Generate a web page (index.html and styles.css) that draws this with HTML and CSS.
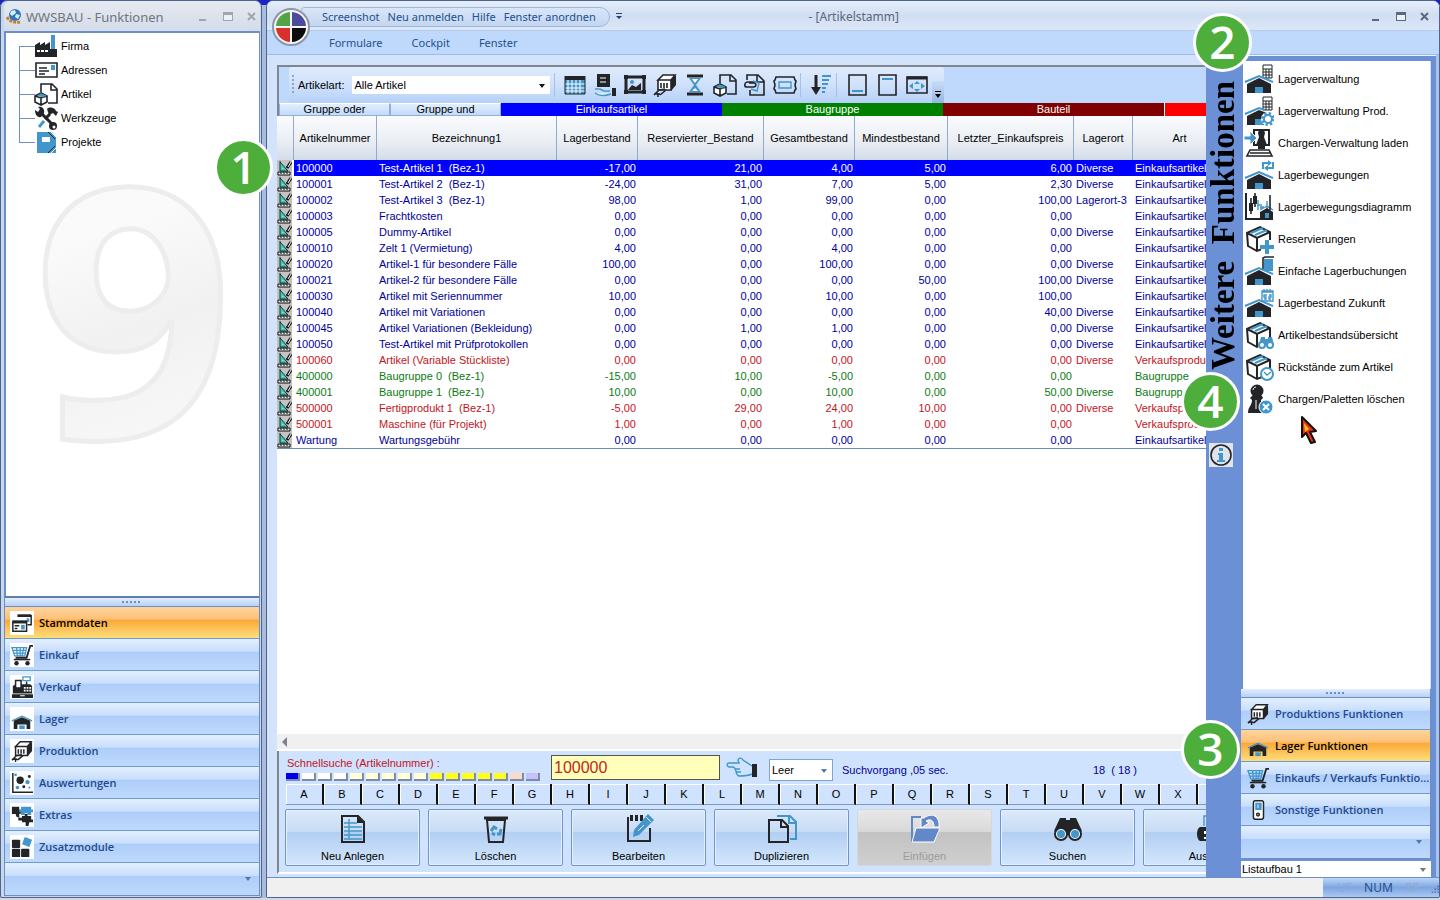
FILE: index.html
```html
<!DOCTYPE html>
<html lang="de">
<head>
<meta charset="utf-8">
<title>WWSBAU - Artikelstamm</title>
<link rel="stylesheet" href="styles.css">
</head>
<body>
<svg class="defs" aria-hidden="true">
  <symbol id="factory" viewBox="0 0 24 24"><path class="b" d="M17 1h4v15h-4z"/><path class="k" d="M1 23V11l5-3v3l5-3v3l5-3v7h7v8z"/><path class="w" d="M3 16h3v2H3zM7 16h3v2H7zM11 16h3v2h-3z"/></symbol>
  <symbol id="card" viewBox="0 0 24 24"><path class="ks" d="M2 5h21v14H2z"/><path class="ks" d="M5 10h8M5 13h10M5 16h6"/><path class="b" d="M17 7h4v5h-4z"/></symbol>
  <symbol id="artikel" viewBox="0 0 24 24"><path class="ks" d="M7 10V2h11l5 5v14h-9M17 2v6h6"/><path class="ks wf" d="M1 14l6-3 6 3v6l-6 3-6-3zM1 14l6 2 6-2M7 16v7"/><path class="bs" d="M4 13l6 2M6 12l6 2"/></symbol>
  <symbol id="tools" viewBox="0 0 24 24"><path class="kt" d="M7 7l13 13"/><path class="k" d="M1 4l3 2 2-3-2-2c4-1 7 2 6 6l-3 4c-4 1-6-3-6-7zM13 3c3-3 8-1 9 2l2 1-2 4-3-3-4 2z"/><path class="kt" d="M16 8l-5 5"/><path class="bt3" d="M10 15l-5 6"/><circle class="k" cx="19" cy="20" r="4"/><circle class="w" cx="20" cy="21" r="1.5"/></symbol>
  <symbol id="project" viewBox="0 0 24 24"><path class="b" d="M3 2h15l4 5v16H3z"/><path class="w" d="M8 7h8v5H8z"/><path class="ks thin" d="M14 2l7 7M14 23l7-7"/><path class="ws" d="M17 2l5 5M17 23l5-5"/></symbol>
  <symbol id="cards" viewBox="0 0 24 24"><path class="ks" d="M8 4h14v10h-4"/><path class="kt" d="M7 4h15"/><path class="b" d="M17 7h3v4h-3z"/><path class="ks wf" d="M2 10h15v11H2z"/><path class="kt" d="M2 11h15"/><path class="ks" d="M4 15h5M4 18h3"/><path class="b" d="M11 14h4v5h-4z"/></symbol>
  <symbol id="cart" viewBox="0 0 24 24"><path class="bs" d="M1 4h16l-2 9H4zM2 7h14M3 10h13M6 4l1 9M10 4v9M14 4l-2 9"/><path class="kt2" d="M24 2h-3l-4 13H5"/><path class="ks" d="M3 17h18"/><circle class="k" cx="6" cy="21" r="2.4"/><circle class="k" cx="18" cy="21" r="2.4"/></symbol>
  <symbol id="register" viewBox="0 0 24 24"><path class="k" d="M2 11l3-2h16l2 2v8H2zM1 20h23v4H1z"/><path class="ks wf" d="M5 5h6v8H5z"/><path class="bs wf" d="M13 1h8v4h-8z"/><path class="ks" d="M17 6v4"/><path class="w" d="M14 12h2v2h-2zM17 12h2v2h-2zM20 12h2v2h-2zM14 15h2v2h-2zM17 15h2v2h-2zM20 15h2v2h-2zM10 21h5v1h-5z"/></symbol>
  <symbol id="house" viewBox="0 0 24 24"><path class="bs" d="M1 14l11-5 11 5"/><path class="k" d="M3 14l9-4 9 4v9h-4v-5H7v5H3z"/><path class="b" d="M9 19h6v4H9z"/></symbol>
  <symbol id="produce" viewBox="0 0 24 24"><path class="ks wf" d="M5 7l5-5h12l-4 5zM5 7h13v10H5z"/><path class="k" d="M18 7l5-5v10l-5 6z"/><path class="ks" d="M8 10v5M11 10v5M14 10v5M6 17l-5 5M13 17l-6 5M1 21h6M12 16l-6 1"/><path class="ks" d="M5 20v4"/></symbol>
  <symbol id="bubbles" viewBox="0 0 24 24"><path class="ks" d="M2 1v21h22"/><circle class="k" cx="10" cy="9" r="4"/><circle class="k" cx="20" cy="5" r="1.6"/><circle class="k" cx="14" cy="16" r="1.6"/><circle class="b" cx="18" cy="11" r="2.4"/><circle class="b" cx="7" cy="17" r="2"/><circle class="b" cx="5" cy="3" r="1.5"/><circle class="b" cx="20" cy="17" r="1.2"/></symbol>
  <symbol id="puzzle" viewBox="0 0 24 24"><path class="k" d="M1 3h8v3l3 1v3L9 11v4l-3-1-1-3H1z"/><path class="b" d="M11 3h11v3h2v3h-2v3h-4v-2h-3v2h-4v-3H9V6h2z"/><path class="k" d="M12 13h3v-2h3v2h4v4h2v3h-4l-1 4h-3v-4h-4v-2H8v-3h4z"/></symbol>
  <symbol id="modules" viewBox="0 0 24 24"><rect class="k" x="1" y="4" width="9" height="9" rx="1"/><rect class="k" x="1" y="14" width="9" height="9" rx="1"/><rect class="k" x="11" y="14" width="9" height="9" rx="1"/><path class="b" d="M15 1l8 3-3 8-8-3z"/></symbol>
  <symbol id="switch" viewBox="0 0 24 24"><rect class="ks wf" x="7" y="2" width="11" height="20" rx="2"/><path class="b" d="M9 4h7v8H9z"/><path class="ws" d="M12 6v4"/><circle class="ks" cx="12" cy="17" r="1.5"/></symbol>

  <symbol id="calc-house" viewBox="0 0 30 30"><path class="ks wf thin" d="M19 1h9v13h-9zM19 5h9M19 8h9M19 11h9M22 5v9M25 5v9"/><path class="bt" d="M1 18l14-6 14 6"/><path class="k" d="M3 20l12-6 12 6v9H3z"/><path class="b" d="M11 23h8v6h-8z"/></symbol>
  <symbol id="gear-house" viewBox="0 0 30 30"><path class="ks wf thin" d="M19 1h9v13h-9zM19 5h9M19 8h9M19 11h9M22 5v9M25 5v9"/><path class="bt" d="M1 18l14-6 6 2"/><path class="k" d="M3 20l12-6 8 3v12H3z"/><path class="b" d="M11 23h8v6h-8z"/><circle class="w" cx="24" cy="23" r="7"/><circle cx="24" cy="23" r="5" class="bdash"/><circle cx="24" cy="23" r="4" class="bt wf"/></symbol>
  <symbol id="pc-load" viewBox="0 0 30 30"><path class="kt2" d="M10 2h15v15H10z"/><path class="k" d="M14 5c0-4 7-4 7 0l-1 4 3 8H12l3-8z"/><path class="k" d="M14 18h7v3h-7z"/><path class="ks" d="M6 22h19l3 6H3zM6 25h20"/><path class="b wo" d="M0 8h6V3l7 7-7 7v-5H0z"/></symbol>
  <symbol id="move-house" viewBox="0 0 30 30"><path class="bt" d="M1 18l14-6 14 6"/><path class="k" d="M3 20l12-6 12 6v9H3z"/><path class="b" d="M11 23h8v6h-8z"/><path class="bt" d="M19 9V3h6M29 2v6h-6"/><path class="b" d="M24 0l4 3-4 3zM24 5l-4 3 4 3z"/></symbol>
  <symbol id="diagram" viewBox="0 0 30 30"><path class="kt2" d="M2 1v26h27"/><path class="ks" d="M7 6v16M11 1v14"/><path class="k" d="M5 11h4v8H5zM9 4h4v8H9z"/><path class="bs" d="M14 8v10M17 12v6M23 9v8M13 13h3M16 15h4M16 18l7-4 6 4"/><path class="ks" d="M26 3v15"/><path class="k" d="M16 20l7-4 6 4v6H16z"/><path class="b" d="M21 21h4v5h-4z"/></symbol>
  <symbol id="box" viewBox="0 0 30 30"><path class="kt2" d="M3 9l13-6 10 5v14l-13 5-9-5zM3 9l10 5 13-6M13 14v13"/><path class="bt" d="M7 9l12-5M11 11l12-5"/></symbol>
  <symbol id="box-plus" viewBox="0 0 30 30"><use href="#box"/><path class="w" d="M17 16h13v14H17z"/><path class="bx" d="M23 16v14M16 23h14"/></symbol>
  <symbol id="book-house" viewBox="0 0 30 30"><path class="b" d="M20 3h9v12h-9z"/><path class="ks" d="M19 14V2l2-1h9"/><path class="bt" d="M1 18l14-6 14 6"/><path class="k" d="M3 20l12-6 12 6v9H3z"/><path class="b" d="M11 23h8v6h-8z"/></symbol>
  <symbol id="cal-house" viewBox="0 0 30 30"><path class="bs wf" d="M18 3h11v10H18z"/><path class="bs" d="M18 4h11M20 1v3M23 1v3M26 1v3M23 7h-3v2h2v2h-2M25 7h2v2h-2v2h2"/><path class="bt" d="M1 18l14-6 14 6"/><path class="k" d="M3 20l12-6 12 6v9H3z"/><path class="b" d="M11 23h8v6h-8z"/></symbol>
  <symbol id="box-look" viewBox="0 0 30 30"><use href="#box"/><path class="w" d="M14 17h16v13H14z"/><path class="b" d="M17 17h4v2h3v-2h4l2 8H15z"/><circle class="bt wf" cx="18" cy="25" r="3"/><circle class="bt wf" cx="26" cy="25" r="3"/></symbol>
  <symbol id="box-clock" viewBox="0 0 30 30"><use href="#box"/><circle class="bt wf" cx="23" cy="22" r="6"/><path class="bs" d="M20 20l3 3 4-3"/></symbol>
  <symbol id="pawn-x" viewBox="0 0 30 30"><circle class="k" cx="13" cy="7" r="6.5"/><path class="k" d="M8 12h10l1 2-2 2c0 6 3 6 3 13H4c0-7 4-7 4-13l-2-2z"/><path class="ws" d="M9 6c0-2 2-3 3-3M12 16v9"/><circle class="b wo" cx="22" cy="23" r="7"/><path class="ws2" d="M19 20l6 6M25 20l-6 6"/></symbol>

  <symbol id="t-table" viewBox="0 0 24 24"><path class="b" d="M2 3h20v18H2z"/><path class="k" d="M2 3h20v4H2z"/><path class="ws" d="M5 7v14M9 7v14M13 7v14M17 7v14M2 11h20M2 15h20M2 18h20"/><path class="ks thin" d="M2 3v18h20V3"/></symbol>
  <symbol id="t-hand" viewBox="0 0 24 24"><path class="k" d="M4 1h13v13H4z"/><path class="ws" d="M7 5h6M7 9h6"/><path class="bs wf" d="M2 16h5l4 2h6M2 20c4 3 10 3 16 1"/><path class="k" d="M19 15h4v8h-4z"/></symbol>
  <symbol id="t-picture" viewBox="0 0 24 24"><path class="kt" d="M3 4h18v15H3z"/><path class="k" d="M1 2h4v4H1zM19 2h4v4h-4zM1 17h4v4H1zM19 17h4v4h-4zM5 17l4-5 4 2 5-4v7z"/><circle class="b" cx="9" cy="9" r="2"/></symbol>
  <symbol id="t-glass" viewBox="0 0 24 24"><path class="b" d="M6 5h12l-5 7 5 7H6l5-7z"/><path class="kt" d="M4 3h16M4 21h16"/><path class="w" d="M9 6h6l-3 4zM12 15l3 3H9z"/></symbol>
  <symbol id="t-clip" viewBox="0 0 24 24"><path class="ks" d="M4 7V2h11l6 6v14H7v-5M14 2v7h7"/><path class="ks" d="M12 9H4c-3 1-3 5 0 5h7c3-1 2-4 0-4H6"/><path class="bs" d="M10 8l6 2-2 8-6-2"/></symbol>
  <symbol id="t-ticket" viewBox="0 0 24 24"><path class="ks" d="M3 4h18l1 3 1 1-1 4 1 4-1 1-1 3H3l-1-3-1-1 1-4-1-4 1-1z"/><path class="bs" d="M6 9h12v6H6z"/></symbol>
  <symbol id="t-sort" viewBox="0 0 24 24"><path class="kt" d="M7 2v16"/><path class="k" d="M2 14h10l-5 8z"/><path class="bt" d="M13 3h9M13 7h7M13 11h6M13 15h4M13 19h3"/></symbol>
  <symbol id="t-bottom" viewBox="0 0 24 24"><path class="ks" d="M4 2h17v20H4z"/><path class="bt" d="M7 18h11"/></symbol>
  <symbol id="t-top" viewBox="0 0 24 24"><path class="ks" d="M4 2h17v20H4z"/><path class="bt" d="M7 6h11"/></symbol>
  <symbol id="t-full" viewBox="0 0 24 24"><path class="ks" d="M2 4h20v16H2z"/><path class="kt" d="M2 5h20"/><path class="b" d="M12 8l3 3H9zM12 19l3-3H9zM4 13l4-3v6zM20 13l-4-3v6z"/></symbol>

  <symbol id="a-new" viewBox="0 0 30 30"><path class="kt2" d="M4 2h16l6 6v20H4z"/><path class="k" d="M19 2l7 7h-7z"/><path class="bs" d="M11 5v20M6 9h13M6 13h18M6 17h18M6 21h18M6 25h18"/></symbol>
  <symbol id="a-bin" viewBox="0 0 30 30"><path class="kt" d="M3 4h24"/><path class="kt2" d="M6 6l2 22h14l2-22z"/><path class="bt3" d="M10 17l3-4 3 2M20 15l-1 5h-3M11 19l3 2"/></symbol>
  <symbol id="a-edit" viewBox="0 0 30 30"><path class="kt2" d="M4 3v24h22V14"/><path class="k" d="M6 1h3v6H6zM11 1h3v6h-3zM16 1h3v6h-3z"/><path class="b" d="M24 0l6 6-15 15-6 2 1-7z"/><path class="ws" d="M22 3l5 5M14 17l6-6"/></symbol>
  <symbol id="a-dup" viewBox="0 0 30 30"><path class="bt" d="M10 2h13l6 6v17h-6M22 2v7h7"/><path class="kt2" d="M2 6h13l6 6v16H2zM14 6v7h7"/></symbol>
  <symbol id="a-paste" viewBox="0 0 30 30"><path class="ps" d="M11 3H2v24h5"/><path class="p" d="M6 14h24l-6 14H2z"/><path class="p" d="M11 4v10l8-5-3-2c5-3 8 0 8 6h5C30 2 22-2 14 4z"/></symbol>
  <symbol id="a-find" viewBox="0 0 30 30"><path class="k" d="M7 4h6v2h4V4h6l6 13-5 4H6l-5-4z"/><circle class="kt2 wf" cx="8" cy="20" r="6"/><circle class="kt2 wf" cx="22" cy="20" r="6"/><circle class="b" cx="8" cy="20" r="4"/><circle class="b" cx="22" cy="20" r="4"/></symbol>
  <symbol id="a-print" viewBox="0 0 30 30"><path class="bs" d="M8 12V2h14v10"/><path class="k" d="M4 13h24v14H4c-4-2-4-12 0-14z"/><path class="w" d="M8 17h14v3H8zM8 23h14v2H8z"/></symbol>
  <symbol id="row" viewBox="0 0 15 16"><path fill="#c2c2c2" d="M0 0h15v16H0z"/><path fill="#35cdbc" d="M3 2l8 9H3z"/><path fill="none" stroke="#16302f" d="M3 1v10h8L3 2"/><path fill="#c2c2c2" d="M5 7l2 2H5z"/><path fill="#e8e8e8" stroke="#111" d="M1 12h12v3H1z"/><path stroke="#111" d="M4 12v2M7 12v2M10 12v2"/><path stroke="#111" stroke-width="3" d="M14 2l-4 6"/><path stroke="#fff" d="M14 2l-3 5"/></symbol>
  <symbol id="winbtns" viewBox="0 0 60 14"><path fill="currentColor" d="M1 9h7v2H1zM25 2h10v9H25z"/><path fill="#eaf1fb" d="M26 5h8v5h-8z"/><path stroke="currentColor" stroke-width="2" d="M50 3l7 7M57 3l-7 7"/></symbol>
</svg>

<div class="desktop">
  <section class="window functions">
    <header class="caption">
      <svg class="app-icon" viewBox="0 0 16 16"><circle cx="9" cy="6" r="6" fill="#2d76bb"/><path fill="#d8eefa" d="M5 2l4-1 1 3-4 3-2-2zM10 5l4 1-2 4-3-2z"/><path fill="none" stroke="#c98035" stroke-width="3" stroke-dasharray="3 1" d="M1 8c3 5 8 6 14 5"/></svg>
      <h1>WWSBAU - Funktionen</h1>
      <svg class="winbtns" aria-hidden="true"><use href="#winbtns"/></svg>
    </header>
    <div class="tree-pane">
      <span class="watermark" aria-hidden="true">9</span>
      <ul class="tree">
        <li><svg><use href="#factory"/></svg>Firma</li>
        <li><svg><use href="#card"/></svg>Adressen</li>
        <li><svg><use href="#artikel"/></svg>Artikel</li>
        <li><svg><use href="#tools"/></svg>Werkzeuge</li>
        <li><svg><use href="#project"/></svg>Projekte</li>
      </ul>
    </div>
    <nav class="outlook boxed">
      <div class="grip"></div>
      <button class="active"><svg><use href="#cards"/></svg>Stammdaten</button>
      <button><svg><use href="#cart"/></svg>Einkauf</button>
      <button><svg><use href="#register"/></svg>Verkauf</button>
      <button><svg><use href="#house"/></svg>Lager</button>
      <button><svg><use href="#produce"/></svg>Produktion</button>
      <button><svg><use href="#bubbles"/></svg>Auswertungen</button>
      <button><svg><use href="#puzzle"/></svg>Extras</button>
      <button><svg><use href="#modules"/></svg>Zusatzmodule</button>
      <div class="more"><i class="caret"></i></div>
    </nav>
    <span class="badge one">1</span>
  </section>

  <section class="window main">
    <header class="titlebar">
      <nav class="quick">
        <button>Screenshot</button><button>Neu anmelden</button><button>Hilfe</button><button>Fenster anordnen</button>
      </nav>
      <svg class="quick-more" viewBox="0 0 8 8"><path fill="#2a4070" d="M1 0h6v1H1zM1 3h6L4 6z"/></svg>
      <h2>- [Artikelstamm]</h2>
      <svg class="winbtns" aria-hidden="true"><use href="#winbtns"/></svg>
    </header>
    <nav class="menubar"><button>Formulare</button><button>Cockpit</button><button>Fenster</button></nav>
    <svg class="orb" viewBox="0 0 38 38"><circle cx="19" cy="19" r="18" fill="#f5f5f5" stroke="#8c96a6" stroke-width="2"/><path fill="#52a447" d="M18 4v14H4A15 15 0 0 1 18 4z"/><path fill="#4b4a9b" d="M20 4v14h14A15 15 0 0 0 20 4z"/><path fill="#d9302c" d="M18 34V20H4a15 15 0 0 0 14 14z"/><path fill="#0b0b0b" d="M20 34V20h14a15 15 0 0 1-14 14z"/></svg>

    <div class="work">
      <main class="child">
        <div class="toolbar">
          <div class="tools">
            <label for="art">Artikelart:</label>
            <span class="combo art"><select id="art"><option>Alle Artikel</option></select><i class="caret dark"></i></span>
            <i class="sep"></i>
            <button aria-label="Tabelle"><svg><use href="#t-table"/></svg></button>
            <button aria-label="Lager"><svg><use href="#t-hand"/></svg></button>
            <button aria-label="Bild"><svg><use href="#t-picture"/></svg></button>
            <button aria-label="Produktion"><svg><use href="#produce"/></svg></button>
            <button aria-label="Verlauf"><svg><use href="#t-glass"/></svg></button>
            <button aria-label="Artikel"><svg><use href="#artikel"/></svg></button>
            <button aria-label="Dokumente"><svg><use href="#t-clip"/></svg></button>
            <button aria-label="Etikett"><svg><use href="#t-ticket"/></svg></button>
            <i class="sep"></i>
            <button aria-label="Sortieren"><svg><use href="#t-sort"/></svg></button>
            <i class="sep"></i>
            <button aria-label="Unten"><svg><use href="#t-bottom"/></svg></button>
            <button aria-label="Oben"><svg><use href="#t-top"/></svg></button>
            <button aria-label="Vollbild"><svg><use href="#t-full"/></svg></button>
            <span class="overflow"><svg viewBox="0 0 8 8"><path d="M1 0h6v1H1zM1 3h6L4 7z"/></svg></span>
          </div>
        </div>
        <div class="groups">
          <button>Gruppe oder</button><button>Gruppe und</button>
          <span class="blue">Einkaufsartikel</span><span class="green">Baugruppe</span><span class="maroon">Bauteil</span><span class="red"></span>
        </div>
        <div class="grid">
          <table>
            <colgroup><col class="c-icon"><col class="c-nr"><col class="c-name"><col class="c-stock"><col class="c-res"><col class="c-total"><col class="c-min"><col class="c-price"><col class="c-place"><col class="c-type"></colgroup>
            <thead><tr><th></th><th>Artikelnummer</th><th>Bezeichnung1</th><th>Lagerbestand</th><th>Reservierter_Bestand</th><th>Gesamtbestand</th><th>Mindestbestand</th><th>Letzter_Einkaufspreis</th><th>Lagerort</th><th>Art</th></tr></thead>
            <tbody>
              <tr class="sel"><td><svg><use href="#row"/></svg></td><td>100000</td><td>Test-Artikel 1&nbsp; (Bez-1)</td><td>-17,00</td><td>21,00</td><td>4,00</td><td>5,00</td><td>6,00</td><td>Diverse</td><td>Einkaufsartikel</td></tr>
              <tr><td><svg><use href="#row"/></svg></td><td>100001</td><td>Test-Artikel 2&nbsp; (Bez-1)</td><td>-24,00</td><td>31,00</td><td>7,00</td><td>5,00</td><td>2,30</td><td>Diverse</td><td>Einkaufsartikel</td></tr>
              <tr><td><svg><use href="#row"/></svg></td><td>100002</td><td>Test-Artikel 3&nbsp; (Bez-1)</td><td>98,00</td><td>1,00</td><td>99,00</td><td>0,00</td><td>100,00</td><td>Lagerort-3</td><td>Einkaufsartikel</td></tr>
              <tr><td><svg><use href="#row"/></svg></td><td>100003</td><td>Frachtkosten</td><td>0,00</td><td>0,00</td><td>0,00</td><td>0,00</td><td>0,00</td><td></td><td>Einkaufsartikel</td></tr>
              <tr><td><svg><use href="#row"/></svg></td><td>100005</td><td>Dummy-Artikel</td><td>0,00</td><td>0,00</td><td>0,00</td><td>0,00</td><td>0,00</td><td>Diverse</td><td>Einkaufsartikel</td></tr>
              <tr><td><svg><use href="#row"/></svg></td><td>100010</td><td>Zelt 1 (Vermietung)</td><td>4,00</td><td>0,00</td><td>4,00</td><td>0,00</td><td>0,00</td><td></td><td>Einkaufsartikel</td></tr>
              <tr><td><svg><use href="#row"/></svg></td><td>100020</td><td>Artikel-1 für besondere Fälle</td><td>100,00</td><td>0,00</td><td>100,00</td><td>0,00</td><td>0,00</td><td>Diverse</td><td>Einkaufsartikel</td></tr>
              <tr><td><svg><use href="#row"/></svg></td><td>100021</td><td>Artikel-2 für besondere Fälle</td><td>0,00</td><td>0,00</td><td>0,00</td><td>50,00</td><td>100,00</td><td>Diverse</td><td>Einkaufsartikel</td></tr>
              <tr><td><svg><use href="#row"/></svg></td><td>100030</td><td>Artikel mit Seriennummer</td><td>10,00</td><td>0,00</td><td>10,00</td><td>0,00</td><td>100,00</td><td></td><td>Einkaufsartikel</td></tr>
              <tr><td><svg><use href="#row"/></svg></td><td>100040</td><td>Artikel mit Variationen</td><td>0,00</td><td>0,00</td><td>0,00</td><td>0,00</td><td>40,00</td><td>Diverse</td><td>Einkaufsartikel</td></tr>
              <tr><td><svg><use href="#row"/></svg></td><td>100045</td><td>Artikel Variationen (Bekleidung)</td><td>0,00</td><td>1,00</td><td>1,00</td><td>0,00</td><td>0,00</td><td>Diverse</td><td>Einkaufsartikel</td></tr>
              <tr><td><svg><use href="#row"/></svg></td><td>100050</td><td>Test-Artikel mit Prüfprotokollen</td><td>0,00</td><td>0,00</td><td>0,00</td><td>0,00</td><td>0,00</td><td>Diverse</td><td>Einkaufsartikel</td></tr>
              <tr class="r"><td><svg><use href="#row"/></svg></td><td>100060</td><td>Artikel (Variable Stückliste)</td><td>0,00</td><td>0,00</td><td>0,00</td><td>0,00</td><td>0,00</td><td>Diverse</td><td>Verkaufsprodukt</td></tr>
              <tr class="g"><td><svg><use href="#row"/></svg></td><td>400000</td><td>Baugruppe 0&nbsp; (Bez-1)</td><td>-15,00</td><td>10,00</td><td>-5,00</td><td>0,00</td><td>0,00</td><td></td><td>Baugruppe</td></tr>
              <tr class="g"><td><svg><use href="#row"/></svg></td><td>400001</td><td>Baugruppe 1&nbsp; (Bez-1)</td><td>10,00</td><td>0,00</td><td>10,00</td><td>0,00</td><td>50,00</td><td>Diverse</td><td>Baugruppe</td></tr>
              <tr class="r"><td><svg><use href="#row"/></svg></td><td>500000</td><td>Fertigprodukt 1&nbsp; (Bez-1)</td><td>-5,00</td><td>29,00</td><td>24,00</td><td>10,00</td><td>0,00</td><td>Diverse</td><td>Verkaufsprodukt</td></tr>
              <tr class="r"><td><svg><use href="#row"/></svg></td><td>500001</td><td>Maschine (für Projekt)</td><td>1,00</td><td>0,00</td><td>1,00</td><td>0,00</td><td>0,00</td><td></td><td>Verkaufsprodukt</td></tr>
              <tr><td><svg><use href="#row"/></svg></td><td>Wartung</td><td>Wartungsgebühr</td><td>0,00</td><td>0,00</td><td>0,00</td><td>0,00</td><td>0,00</td><td></td><td>Einkaufsartikel</td></tr>
            </tbody>
          </table>
        </div>
        <div class="hscroll"><svg viewBox="0 0 5 10"><path fill="#7d8090" d="M5 0v10L0 5z"/></svg></div>
        <div class="bottom">
          <div class="search">
            <div class="quicksearch">
              <label for="q">Schnellsuche (Artikelnummer) :</label>
              <div class="swatches"><i class="s-blue"></i><i></i><i></i><i></i><i class="s-pale"></i><i class="s-pale"></i><i class="s-pale"></i><i class="s-pale"></i><i class="s-pale"></i><i class="s-yel"></i><i class="s-yel"></i><i class="s-yel"></i><i class="s-yel"></i><i class="s-yel"></i><i class="s-pink"></i><i class="s-lil"></i></div>
            </div>
            <input id="q" type="text" value="100000">
            <svg class="hand" viewBox="0 0 32 24"><path class="bs" d="M8 12H3c-3-1-2-4 0-4h10l-1-3c1-3 4-2 5 0l9 6M26 19c-4 2-9 2-13 2-2-1-3-3-3-5l-2-4M9 14h5M10 17h5"/><path class="k" d="M26 9h5v13h-5z"/></svg>
            <span class="combo empty"><select aria-label="Filter"><option>Leer</option></select><i class="caret"></i></span>
            <span class="timing">Suchvorgang ,05 sec.</span>
            <span class="count">18&nbsp; ( 18 )</span>
          </div>
          <div class="letters"><button>A</button><button>B</button><button>C</button><button>D</button><button>E</button><button>F</button><button>G</button><button>H</button><button>I</button><button>J</button><button>K</button><button>L</button><button>M</button><button>N</button><button>O</button><button>P</button><button>Q</button><button>R</button><button>S</button><button>T</button><button>U</button><button>V</button><button>W</button><button>X</button><button aria-label="Y"></button></div>
          <div class="actions">
            <button><svg><use href="#a-new"/></svg>Neu Anlegen</button>
            <button><svg><use href="#a-bin"/></svg>Löschen</button>
            <button><svg><use href="#a-edit"/></svg>Bearbeiten</button>
            <button><svg><use href="#a-dup"/></svg>Duplizieren</button>
            <button disabled><svg><use href="#a-paste"/></svg>Einfügen</button>
            <button><svg><use href="#a-find"/></svg>Suchen</button>
            <button><svg><use href="#a-print"/></svg>Ausgabe</button>
          </div>
        </div>
      </main>

      <aside class="side">
        <div class="strip">
          <h3>Weitere  Funktionen</h3>
          <button class="info" aria-label="Info"><svg viewBox="0 0 24 24"><circle class="ks" cx="12" cy="12" r="10"/><path class="b" d="M10 5h4v3h-4zM9 10h5v7h2v2H8v-2h2v-5H9z"/></svg></button>
        </div>
        <div class="panel">
          <ul class="more-list">
            <li><svg><use href="#calc-house"/></svg>Lagerverwaltung</li>
            <li><svg><use href="#gear-house"/></svg>Lagerverwaltung Prod.</li>
            <li><svg><use href="#pc-load"/></svg>Chargen-Verwaltung laden</li>
            <li><svg><use href="#move-house"/></svg>Lagerbewegungen</li>
            <li><svg><use href="#diagram"/></svg>Lagerbewegungsdiagramm</li>
            <li><svg><use href="#box-plus"/></svg>Reservierungen</li>
            <li><svg><use href="#book-house"/></svg>Einfache Lagerbuchungen</li>
            <li><svg><use href="#cal-house"/></svg>Lagerbestand Zukunft</li>
            <li><svg><use href="#box-look"/></svg>Artikelbestandsübersicht</li>
            <li><svg><use href="#box-clock"/></svg>Rückstände zum Artikel</li>
            <li><svg><use href="#pawn-x"/></svg>Chargen/Paletten löschen</li>
          </ul>
          <nav class="outlook">
            <div class="grip"></div>
            <button><svg><use href="#produce"/></svg>Produktions Funktionen</button>
            <button class="active"><svg><use href="#house"/></svg>Lager Funktionen</button>
            <button><svg><use href="#cart"/></svg><span>Einkaufs / Verkaufs Funktionen</span></button>
            <button><svg><use href="#switch"/></svg>Sonstige Funktionen</button>
            <div class="more"><i class="caret"></i></div>
          </nav>
          <span class="combo layout"><select aria-label="Listaufbau"><option>Listaufbau 1</option></select><i class="caret grey"></i></span>
        </div>
        <span class="badge two">2</span>
        <span class="badge three">3</span>
        <span class="badge four">4</span>
        <svg class="pointer" viewBox="0 0 18 30"><path fill="#e8330e" stroke="#111" stroke-width="2" stroke-linejoin="round" d="M2 2l14 14-6 1 5 10-4 1-5-10-4 4z"/><path fill="#ffc31e" d="M4 8l5 6-4 3z"/></svg>
      </aside>
    </div>
    <footer class="status"><div class="keys"><span>UF</span><b>NUM</b><span>RF</span><svg viewBox="0 0 12 12"><path fill="#4569a8" d="M9 0h2v2H9zM5 4h2v2H5zM9 4h2v2H9zM1 8h2v2H1zM5 8h2v2H5zM9 8h2v2H9z"/></svg></div></footer>
  </section>
</div>
</body>
</html>
```
FILE: styles.css
```css
* { box-sizing: border-box; }
html, body { margin: 0; }
body { background: #d4d8e2; color: #000; font: 11px/16px "Liberation Sans", Arial, sans-serif; }
button, select, input { font: inherit; color: inherit; margin: 0; padding: 0; border: 0; background: none; border-radius: 0; }
ul { list-style: none; margin: 0; padding: 0; }
h1, h2, h3 { margin: 0; font-weight: normal; }

/* icon palette */
.defs { display: none; }
.k { fill: #222428; }
.b { fill: #4296cb; }
.w { fill: #fff; }
.p { fill: #6288c8; stroke: #fff; stroke-width: 1; }
.ks, .kt, .kt2, .bs, .bt, .bt3, .bx, .ws, .ws2, .ps, .bdash { fill: none; }
.ks { stroke: #222428; stroke-width: 1.6; }
.kt { stroke: #222428; stroke-width: 3; }
.kt2 { stroke: #222428; stroke-width: 2; }
.bs { stroke: #4296cb; stroke-width: 1.4; }
.bt { stroke: #4296cb; stroke-width: 2; }
.bt3 { stroke: #4296cb; stroke-width: 3; }
.bx { stroke: #4296cb; stroke-width: 4; }
.bdash { stroke: #4296cb; stroke-width: 4; stroke-dasharray: 2 1.93; }
.ws { stroke: #fff; stroke-width: 1; }
.ws2 { stroke: #fff; stroke-width: 2; }
.ps { stroke: #6288c8; stroke-width: 2; }
.wo { stroke: #fff; stroke-width: 1; }
.thin { stroke-width: 1; }
.wf { fill: #fff; }

/* windows */
.desktop { display: grid; grid-template-columns: 262px minmax(0, 1fr); gap: 4px; min-height: 100vh; padding-bottom: 2px; background: linear-gradient(#1c22c4 5px, #a9bcdb 5px, #a9bcdb calc(100% - 2px), #d4d8e2 calc(100% - 2px)); }
.window { position: relative; display: flex; flex-direction: column; min-width: 0; border: 1px solid #4d648f; border-radius: 7px 7px 2px 2px; }
.functions { padding: 0 1px 1px 3px; background: #c9d7ec; }
.caption { display: flex; align-items: center; gap: 4px; height: 30px; padding: 2px 2px 0; font: 13px/18px "Noto Sans", sans-serif; color: #70757e; background: linear-gradient(#e6eaf1, #d3dce9); border-radius: 6px 6px 0 0; }
.caption h1, .titlebar h2 { font-size: inherit; }
.app-icon { width: 16px; height: 16px; }
.winbtns { width: 60px; height: 14px; margin-left: auto; color: #5b6880; }
.caption .winbtns { color: #a0a6b0; }
.tree-pane { position: relative; flex: 1; overflow: hidden; border: 2px solid #6b8fc9; border-right-width: 1px; border-bottom-color: #5f7fae; background: #fff; }
.watermark { position: absolute; left: 28px; top: 32px; font: bold 348px/476px "Open Sans", sans-serif; color: transparent; background: linear-gradient(160deg, #fafafa 35%, #f1f1f1 55%, #f7f7f7 75%, #f1f1f1); -webkit-background-clip: text; background-clip: text; -webkit-text-stroke: 5px #ededed; }
.tree { position: relative; padding: 1px 0 0 13px; }
.tree li { position: relative; display: flex; align-items: center; gap: 3px; height: 24px; padding-left: 15px; }
.tree li::before { content: ""; position: absolute; left: 0; top: -12px; width: 15px; height: 24px; border: solid #6b8fc9; border-width: 0 0 1px 1px; }
.tree li:first-child::before { top: 12px; border-width: 1px 0 0 1px; }
.tree svg { position: relative; width: 24px; height: 24px; }

/* stacked navigation */
.outlook { font: 600 11px/16px "Open Sans", sans-serif; color: #1f4a8c; border: 1px solid #6a8fc4; border-top: 0; }
.outlook .grip { height: 9px; border-bottom: 1px solid #6a8fc4; background: linear-gradient(#e3eefd, #b6d0f6); position: relative; }
.outlook .grip::after { content: ""; position: absolute; left: calc(50% - 10px); top: 3px; width: 18px; height: 2px; background: repeating-linear-gradient(90deg, #6c8fc4 0 2px, transparent 2px 4px); }
.outlook button, .more { display: flex; align-items: center; gap: 5px; width: 100%; height: 32px; padding: 0 0 0 5px; border-bottom: 1px solid #6a9bd2; text-align: left; background: linear-gradient(#e3effe, #c8defc 40%, #adcdf9 41%, #bfd9fc); }
.outlook svg { flex: none; width: 24px; height: 24px; padding: 1px; }
.outlook span { overflow: hidden; white-space: nowrap; text-overflow: ellipsis; }
.boxed svg { background: #fff; }
.outlook .active { color: #000; background: linear-gradient(#fdd49d, #fdc076 40%, #fba735 41%, #fede7c); }
.outlook .more { justify-content: flex-end; padding-right: 8px; border: 0; }
.caret { width: 0; height: 0; border: solid transparent; border-width: 4px 3px 0; border-top-color: #5578a8; }
.caret.dark { border-top-color: #111; }
.caret.grey { border-top-color: #777; }

/* main window */
.main { background: #bfd9fd; }
.titlebar { display: flex; align-items: center; height: 30px; padding: 3px 8px 0 34px; font: 12px/18px "Noto Sans", sans-serif; color: #5c6778; background: linear-gradient(#e6eefa, #d0def2 50%, #dce8f9); border-bottom: 1px solid #b4cae8; border-radius: 6px 6px 0 0; }
.quick { display: flex; gap: 8px; padding: 0 13px 0 20px; border: 1px solid #a2b8da; border-radius: 4px 12px 12px 4px; font-size: 11px; color: #24508e; background: linear-gradient(#d9e6f8, #c3d6f1); }
.quick-more { width: 8px; height: 8px; margin-left: 5px; }
.titlebar h2 { flex: 1; text-align: right; padding-right: 472px; }
.titlebar .winbtns { flex: none; margin: 0; }
.menubar { display: flex; gap: 29px; height: 24px; padding: 1px 0 0 62px; font: 11px/18px "Noto Sans", sans-serif; color: #24508e; border-bottom: 1px solid #9dbce8; }
.orb { position: absolute; left: 5px; top: 7px; width: 38px; height: 38px; }
.work { display: flex; flex: 1; min-height: 0; background: #d3e3fb; border-right: 3px solid #a9c3ea; }
.child { display: flex; flex: 1; flex-direction: column; min-width: 0; margin: 10px 0 0 10px; border-top: 2px solid #80868f; background: #fff; overflow: hidden; }
.toolbar { height: 36px; padding-left: 10px; border-left: 2px solid #80868f; background: #bfd9fd; }
.tools { display: inline-flex; align-items: center; height: 36px; padding-left: 9px; border-radius: 3px; background: linear-gradient(#dfebfc, #cfe1fb 50%, #b5d1f8); position: relative; }
.tools::before { content: ""; position: absolute; left: 3px; top: 8px; width: 2px; height: 20px; background: repeating-linear-gradient(#8ea5c6 0 2px, transparent 2px 4px); }
.tools svg { width: 24px; height: 24px; display: block; margin: auto; }
.tools button { width: 30px; height: 30px; }
.tools .sep { width: 6px; height: 24px; border-left: 1px solid #a6c0e6; }
.combo { position: relative; display: block; }
.combo select { appearance: none; display: block; width: 100%; height: 100%; background: #fff; padding-left: 2px; }
.combo .caret { position: absolute; right: 5px; top: 50%; margin-top: -1px; pointer-events: none; }
.art { width: 198px; height: 18px; margin: 0 4px 0 8px; }
.tools .overflow { align-self: flex-end; width: 12px; height: 22px; padding-top: 10px; background: linear-gradient(#c9dcf8, #97b5e3); }
.tools .overflow svg { width: 8px; height: 8px; }
.groups { display: flex; height: 13px; line-height: 13px; text-align: center; color: #fff; border-left: 2px solid #80868f; background: #bfd9fd; }
.groups > * { flex: none; width: 221px; overflow: hidden; }
.groups button { width: 111px; color: #000; line-height: 11px; border: 1px solid #8fb0dc; border-top-color: #fff; background: linear-gradient(#e3eefd, #c3dafa); }
.blue { background: #0000fe; }
.green { background: #008000; }
.maroon { background: #800000; }
.red { background: #fe0000; border-left: 1px solid #fff; }

.grid { flex: 1; overflow: hidden; background: #fff; }
table { table-layout: fixed; width: 950px; border-collapse: separate; border-spacing: 0; color: #00009a; }
.c-icon { width: 17px; } .c-nr { width: 83px; } .c-name { width: 180px; } .c-stock { width: 81px; } .c-res { width: 126px; }
.c-total { width: 91px; } .c-min { width: 93px; } .c-price { width: 126px; } .c-place { width: 59px; } .c-type { width: 94px; }
th { height: 44px; padding: 0; font-weight: normal; color: #000; border-right: 1px solid #93a9c6; background: linear-gradient(#fafbfd, #e9edf3 60%, #d3dce8); }
td { height: 16px; padding: 0 2px; line-height: 16px; overflow: hidden; white-space: nowrap; }
td:first-child { padding: 0; }
td:nth-child(n+4):nth-child(-n+8) { text-align: right; }
td svg { display: block; width: 15px; height: 16px; }
.sel td { color: #fff; background: #0000fe; }
.sel td:first-child { background: #fff; }
.r { color: #c4141c; }
.g { color: #0b7a14; }
tbody tr:last-child td { border-bottom: 1px solid #6a8fb8; }

.hscroll { display: flex; align-items: center; height: 17px; padding-left: 5px; border-bottom: 2px solid #fff; background: #f0f0f0; }
.hscroll svg { width: 5px; height: 10px; }
.bottom { height: 123px; padding: 4px 0 0 6px; border-left: 2px solid #80868f; border-bottom: 2px solid #fff; background: #cfe2fe; box-shadow: 0 3px #cfe2fe; margin-bottom: 3px; }
.search { display: flex; align-items: flex-start; height: 28px; white-space: nowrap; }
.quicksearch { width: 266px; padding-left: 2px; color: #c4141c; }
.quicksearch label { display: block; }
.swatches { display: flex; gap: 2px; margin: 2px 0 0 -1px; }
.swatches i { width: 14px; height: 8px; border: solid #7f8ca0; border-width: 0 2px 2px 0; background: #fff; }
.swatches .s-blue { background: #0000e8; }
.swatches .s-pale { background: #ffffd8; }
.swatches .s-yel { background: #ffff20; }
.swatches .s-pink { background: #fbd9cc; }
.swatches .s-lil { background: #c4c0fa; }
.search input { width: 169px; height: 25px; padding: 0 2px; border: 1px solid #55564a; font-size: 16px; color: #c0281c; background: #ffffb9; }
.hand { width: 32px; height: 24px; margin-left: 6px; }
.empty { width: 64px; height: 22px; margin: 4px 9px 0 11px; border: 1px solid #7fa3d6; }
.timing, .count { padding-top: 7px; color: #00009a; }
.timing { width: 251px; }
.letters { display: flex; padding-left: 1px; margin-top: 1px; }
.letters button { flex: none; width: 38px; height: 21px; border: solid #111; border-width: 0 2px 1px 0; border-bottom-color: #8497b5; box-shadow: inset 1px 1px #fff; }
.actions { display: flex; gap: 8px; margin-top: 4px; }
.actions button { flex: none; display: flex; flex-direction: column; align-items: center; width: 135px; height: 57px; padding-top: 4px; border: 1px solid #7196cc; border-radius: 2px; line-height: 14px; background: linear-gradient(#dbe9fb, #c9dcf5 39%, #b2cef2 40%, #d3e7fd); box-shadow: inset 0 0 0 1px #e5f0fd; }
.actions svg { width: 30px; height: 30px; margin-bottom: 5px; }
.actions button:disabled { color: #9c9c9c; border-color: #d3d8de; background: linear-gradient(#e8e8e8, #d9d9d9 39%, #c2c2c2 40%, #cfcfcf); box-shadow: none; }

/* right panel */
.side { position: relative; flex: none; display: grid; grid-template-columns: 35px minmax(0, 1fr); width: 230px; padding: 5px 5px 0 0; background: #6b90d5; border-top: 1px solid #eef5ff; }
.strip { display: flex; flex-direction: column; align-items: center; padding-top: 20px; }
.strip h3 { writing-mode: vertical-rl; transform: rotate(180deg); white-space: pre; font: bold 33px/33px "Liberation Serif", serif; }
.info { width: 24px; height: 24px; margin: 73px 5px 0 0; background: #dfe4ea; }
.info svg { display: block; width: 24px; height: 24px; }
.panel { display: flex; flex-direction: column; }
.more-list { flex: 1; padding: 2px 0 0 4px; margin-left: 2px; background: #fff; border-right: 1px solid #cfdcf2; }
.more-list li { display: flex; align-items: center; gap: 4px; height: 32px; white-space: nowrap; }
.more-list svg { width: 30px; height: 30px; margin-left: -3px; }
.side .outlook { border-left: 0; }
.layout { height: 16px; margin-top: 2px; background: #fff; }
.layout select { padding-left: 1px; }
.badge { position: absolute; z-index: 2; width: 59px; height: 59px; border: 3px solid #fff; border-radius: 50%; background: #4dae3b; color: #fff; font: 600 46px/50px "Open Sans", sans-serif; text-align: center; }
.one { left: 213px; top: 137px; }
.two { left: -13px; top: -43px; }
.three { left: -25px; bottom: 98px; }
.four { left: -25px; top: 316px; }
.pointer { position: absolute; left: 94px; top: 359px; width: 18px; height: 30px; }

.status { display: flex; justify-content: flex-end; height: 20px; border-top: 1px solid #6a8fc4; background: #f0f0f0; font: 12px/19px "Noto Sans", sans-serif; color: #24508e; }
.keys { display: flex; align-items: center; gap: 12px; width: 116px; padding-left: 14px; background: linear-gradient(#bcd5f8, #7ea6e0 50%, #a9c8f3); }
.keys b { font-weight: normal; }
.keys span { color: #8ba9d6; }
.keys svg { width: 12px; height: 12px; margin-top: 4px; }
```
